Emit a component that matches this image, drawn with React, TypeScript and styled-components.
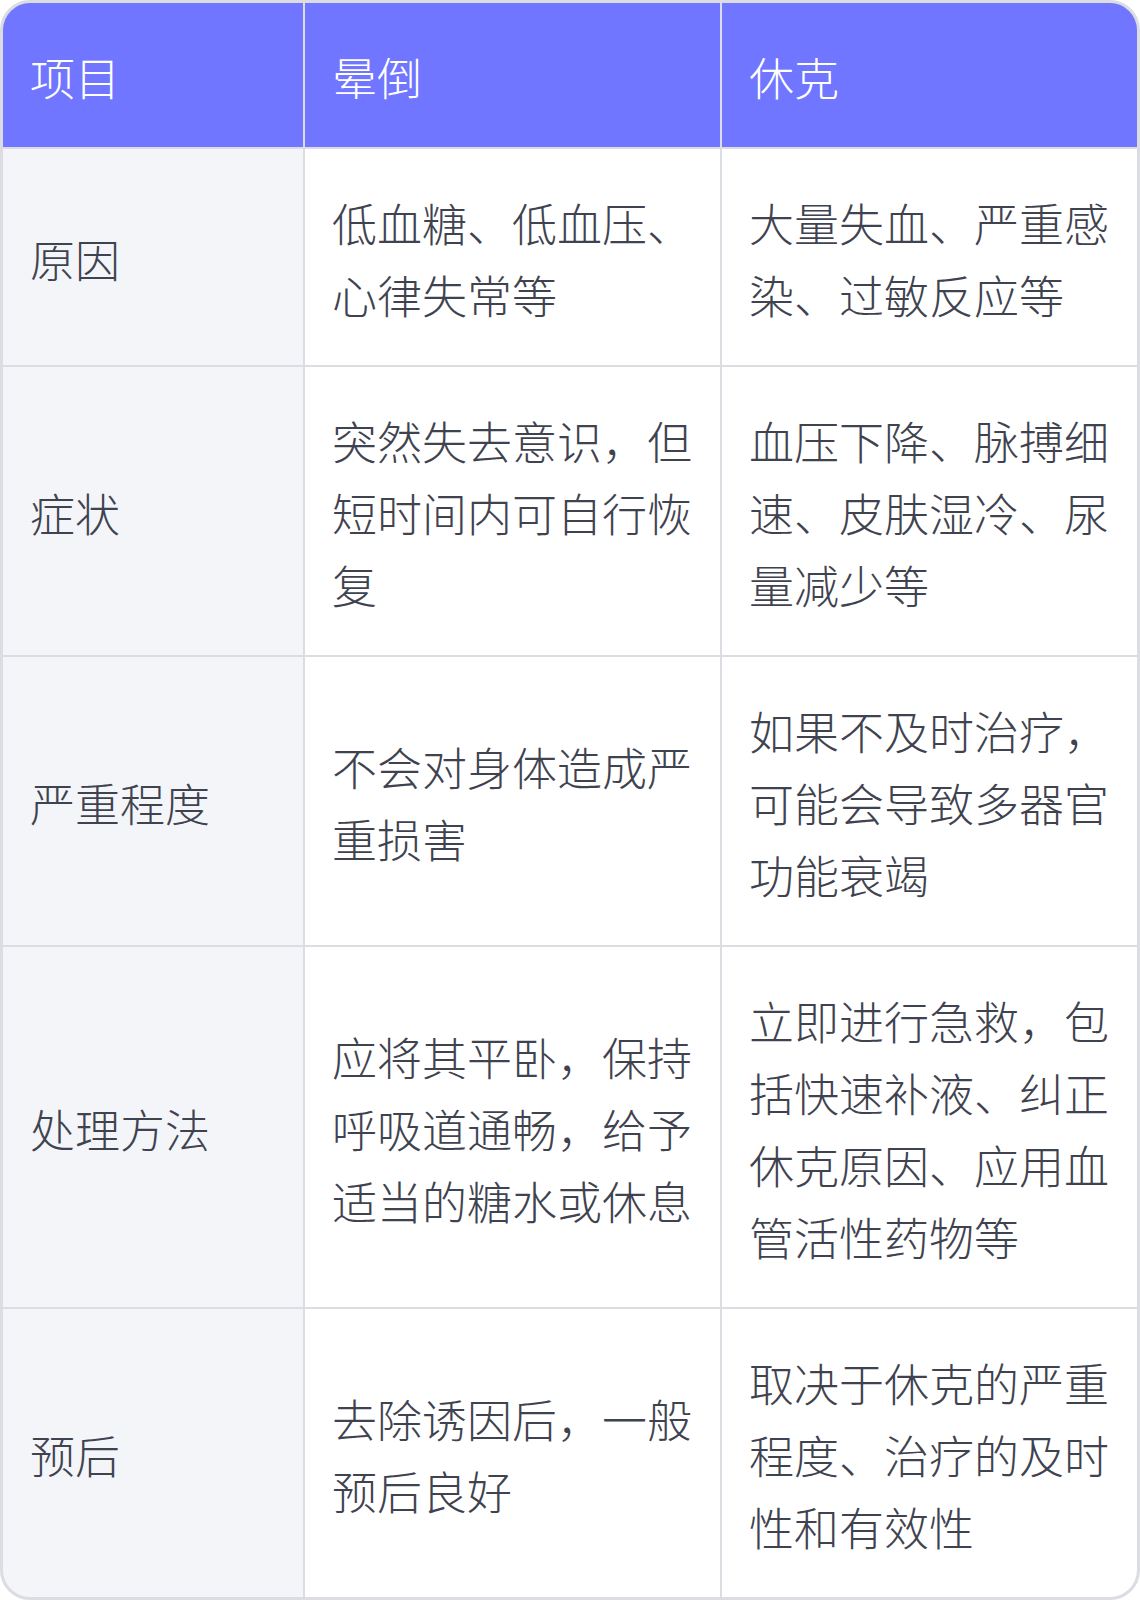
import styled, { createGlobalStyle } from "styled-components";

const GlobalStyle = createGlobalStyle`
  html, body {
    margin: 0;
    padding: 0;
    background: #ffffff;
  }
  body {
    font-family: "Noto Sans CJK SC", "Noto Sans", sans-serif;
  }
`;

const Table = styled.div`
  display: grid;
  grid-template-columns: 300px 415px 415px;
  gap: 2px;
  width: 1140px;
  box-sizing: border-box;
  border: 3px solid #dcdde2;
  border-radius: 30px;
  overflow: hidden;
  background: #dcdde2;
`;

const Cell = styled.div<{ $head?: boolean; $label?: boolean }>`
  display: flex;
  align-items: center;
  padding: 38px 27px 34px;
  font-size: 45px;
  font-weight: 300;
  line-height: 72px;
  color: ${(p) => (p.$head ? "#ffffff" : "#3f4350")};
  background: ${(p) => (p.$head ? "#7076ff" : p.$label ? "#f4f5f9" : "#ffffff")};
`;

const rows = [
  ["原因", "低血糖、低血压、心律失常等", "大量失血、严重感染、过敏反应等"],
  ["症状", "突然失去意识，但短时间内可自行恢复", "血压下降、脉搏细速、皮肤湿冷、尿量减少等"],
  ["严重程度", "不会对身体造成严重损害", "如果不及时治疗，可能会导致多器官功能衰竭"],
  ["处理方法", "应将其平卧，保持呼吸道通畅，给予适当的糖水或休息", "立即进行急救，包括快速补液、纠正休克原因、应用血管活性药物等"],
  ["预后", "去除诱因后，一般预后良好", "取决于休克的严重程度、治疗的及时性和有效性"],
];

const App = () => {
  return (
    <>
      <GlobalStyle />
      <Table>
        <Cell $head>项目</Cell>
        <Cell $head>晕倒</Cell>
        <Cell $head>休克</Cell>
        {rows.map((r) => (
          <>
            <Cell $label key={r[0]}>{r[0]}</Cell>
            <Cell>{r[1]}</Cell>
            <Cell>{r[2]}</Cell>
          </>
        ))}
      </Table>
    </>
  );
};

export default App;
